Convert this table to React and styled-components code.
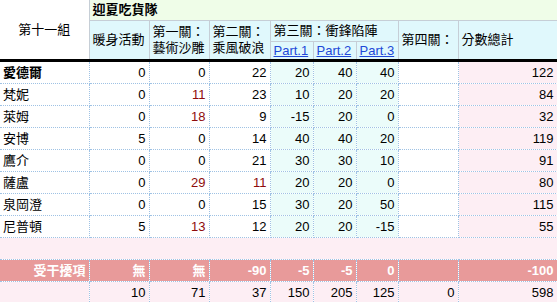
import React from 'react'
import styled, { createGlobalStyle } from 'styled-components'

const GlobalStyle = createGlobalStyle`
  body {
    margin: 0;
    background: #ffffff;
    font-family: "Liberation Sans", "Noto Sans CJK TC", sans-serif;
    font-size: 13px;
    color: #000;
  }
`

const headBorder = '#c6ced6'
const dotBorder = '#9fc2e4'

const Sheet = styled.table`
  border-collapse: collapse;
  table-layout: fixed;
  width: 557px;
  line-height: 16px;
`

const HeadCell = styled.th`
  font-weight: ${p => (p.$bold ? 700 : 400)};
  text-align: ${p => p.$align || 'left'};
  vertical-align: middle;
  padding: 0 3px;
  height: ${p => p.$h || 20}px;
  background: ${p => p.$bg || '#e0f8fc'};
  border: 1px solid ${headBorder};
  border-top: none;
  border-bottom: ${p => (p.$last ? '3px solid #000' : `1px solid ${headBorder}`)};
  white-space: ${p => (p.$wrap ? 'normal' : 'nowrap')};
  overflow: hidden;
  &:first-child { border-left: none; }
`

const Cell = styled.td`
  height: 21px;
  padding: 0 3px;
  text-align: ${p => p.$align || 'right'};
  vertical-align: middle;
  white-space: nowrap;
  overflow: hidden;
  background: ${p => p.$bg || '#ffffff'};
  color: ${p => (p.$red ? '#8e0b0b' : p.$white ? '#ffffff' : '#000')};
  font-weight: ${p => (p.$bold ? 700 : 400)};
  border: 1px dotted ${dotBorder};
  &:first-child { border-left: none; }
`

const PartLink = styled.a`
  color: #2147d8;
  text-decoration: underline;
`

const cyan = '#ebfcfa'
const pink = '#fdeef4'
const salmon = '#e89a9a'

const players = [
  { name: '愛德爾', bold: true, v: [0, 0, 22, 20, 40, 40, '', 122] },
  { name: '梵妮', v: [0, 11, 23, 10, 20, 20, '', 84] },
  { name: '萊姆', v: [0, 18, 9, -15, 20, 0, '', 32] },
  { name: '安博', v: [5, 0, 14, 40, 40, 20, '', 119] },
  { name: '鷹介', v: [0, 0, 21, 30, 30, 10, '', 91] },
  { name: '薩盧', v: [0, 29, 11, 20, 20, 0, '', 80] },
  { name: '泉岡澄', v: [0, 0, 15, 30, 20, 50, '', 115] },
  { name: '尼普頓', v: [5, 13, 12, 20, 20, -15, '', 55] },
]

const colBg = i => (i >= 3 && i <= 5 ? cyan : i === 7 ? pink : '#ffffff')
const isRed = (i, val) => (i === 1 && val > 0) || (i === 2 && val === 11)

const penalty = ['無', '無', '-90', '-5', '-5', '0', '', '-100']
const totals = [10, 71, 37, 150, 205, 125, 0, 598]

export default function App() {
  return (
    <>
      <GlobalStyle />
      <Sheet>
        <colgroup>
          <col style={{ width: 89 }} />
          <col style={{ width: 60 }} />
          <col style={{ width: 60 }} />
          <col style={{ width: 61 }} />
          <col style={{ width: 43 }} />
          <col style={{ width: 43 }} />
          <col style={{ width: 42 }} />
          <col style={{ width: 60 }} />
          <col style={{ width: 99 }} />
        </colgroup>
        <thead>
          <tr>
            <HeadCell rowSpan={3} $bg="#ffffff" $align="center" $last>第十一組</HeadCell>
            <HeadCell colSpan={8} $bg="#effde8" $bold $h={20}>迎夏吃貨隊</HeadCell>
          </tr>
          <tr>
            <HeadCell rowSpan={2} $last>暖身活動</HeadCell>
            <HeadCell rowSpan={2} $last $wrap>第一關：藝術沙雕</HeadCell>
            <HeadCell rowSpan={2} $last $wrap>第二關：乘風破浪</HeadCell>
            <HeadCell colSpan={3} $h={20}>第三關：衝鋒陷陣</HeadCell>
            <HeadCell rowSpan={2} $last>第四關：</HeadCell>
            <HeadCell rowSpan={2} $last>分數總計</HeadCell>
          </tr>
          <tr>
            <HeadCell $last $h={17}><PartLink href="#">Part.1</PartLink></HeadCell>
            <HeadCell $last $h={17}><PartLink href="#">Part.2</PartLink></HeadCell>
            <HeadCell $last $h={17}><PartLink href="#">Part.3</PartLink></HeadCell>
          </tr>
        </thead>
        <tbody>
          {players.map(p => (
            <tr key={p.name}>
              <Cell $align="left" $bold={p.bold}>{p.name}</Cell>
              {p.v.map((val, i) => (
                <Cell key={i} $bg={colBg(i)} $red={isRed(i, val)}>{val}</Cell>
              ))}
            </tr>
          ))}
          <tr>
            <Cell colSpan={9} $bg={pink} />
          </tr>
          <tr>
            <Cell $bg={salmon} $white $bold>受干擾項</Cell>
            {penalty.map((val, i) => (
              <Cell key={i} $bg={salmon} $white $bold>{val}</Cell>
            ))}
          </tr>
          <tr>
            <Cell $bg={pink} />
            {totals.map((val, i) => (
              <Cell key={i} $bg={pink}>{val}</Cell>
            ))}
          </tr>
        </tbody>
      </Sheet>
    </>
  )
}
